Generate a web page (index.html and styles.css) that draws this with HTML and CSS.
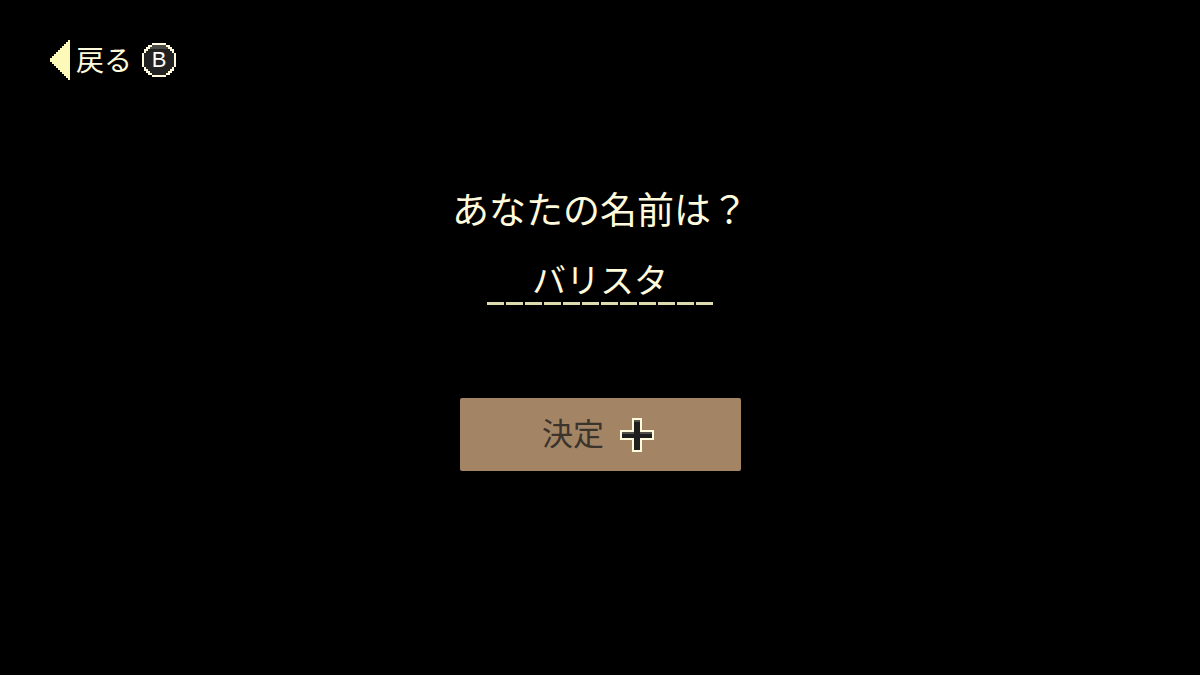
FILE: index.html
```html
<!DOCTYPE html>
<html lang="ja">
<head>
  <meta charset="UTF-8" />
  <meta name="viewport" content="width=device-width, initial-scale=1.0"/>
  <title>あなたの名前は?</title>
  <link rel="stylesheet" href="styles.css">
</head>
<body>
  <header class="top-bar">
    <button type="button" class="back-btn">
      <svg class="arrow" viewBox="0 0 10 20" shape-rendering="crispEdges" aria-hidden="true">
        <path d="M10 0V20H9V19H8V18H7V17H6V16H5V15H4V14H3V13H2V12H1V11H0V9H1V8H2V7H3V6H4V5H5V4H6V3H7V2H8V1H9V0Z" fill="#fdf9b8"/>
      </svg>
      <span class="back-label">戻る</span>
      <span class="pad-key">
        <svg viewBox="0 0 17 17" shape-rendering="crispEdges" aria-hidden="true">
          <path d="M5 0H12V1H14V2H15V3H16V5H17V12H16V14H15V15H14V16H12V17H5V16H3V15H2V14H1V12H0V5H1V3H2V2H3V1H5Z" fill="#fffbdc"/>
          <path d="M5 1H12V2H13V3H14V4H15V5H16V12H15V13H14V14H13V15H12V16H5V15H4V14H3V13H2V12H1V5H2V4H3V3H4V2H5Z" fill="#222"/>
          <path d="M5 1H12V2H13V3H4V2H5Z" fill="#4a4a44"/>
        </svg>
        <span class="pad-letter">B</span>
      </span>
    </button>
  </header>

  <main class="name-form">
    <label class="question" for="playerName">あなたの名前は？</label>
    <input type="text" id="playerName" class="name-input" value="バリスタ" maxlength="12" autocomplete="off" spellcheck="false">
    <button type="button" class="confirm-btn">
      <span class="confirm-label">決定</span>
      <svg class="plus" viewBox="0 0 17 17" shape-rendering="crispEdges" aria-hidden="true">
        <path d="M6 0H11V6H17V11H11V17H6V11H0V6H6Z" fill="#fffbdc"/>
        <path d="M7 1H10V7H16V10H10V16H7V10H1V7H7Z" fill="#1e1e1e"/>
        <path d="M7 1H10V2H7ZM1 7H7V8H1ZM10 7H16V8H10Z" fill="#505048"/>
      </svg>
    </button>
  </main>
</body>
</html>
```
FILE: styles.css
```css
* {
  box-sizing: border-box;
}

body {
  margin: 0;
  background: #000;
  color: #fffbdc;
  font-family: "Noto Sans CJK JP", sans-serif;
}

button, input {
  padding: 0;
  border: none;
  background: none;
  color: inherit;
  font-family: inherit;
}

button {
  cursor: pointer;
}

.top-bar {
  padding: 40px 48px 0;
}

.back-btn {
  display: flex;
  align-items: center;
  height: 40px;
}

.arrow {
  width: 20px;
  height: 40px;
  margin: 0 6px 0 2px;
}

.back-label {
  padding-bottom: 2px;
  font-size: 28px;
  line-height: 38px;
}

.pad-key {
  display: grid;
  place-items: center;
  width: 34px;
  height: 34px;
  margin-left: 10px;
}

.pad-key > * {
  grid-area: 1 / 1;
}

.pad-letter {
  color: #fff;
  font-family: "Liberation Sans", sans-serif;
  font-size: 22px;
  line-height: 22px;
}

.name-form {
  display: flex;
  flex-direction: column;
  align-items: center;
  padding-top: 100px;
}

.question {
  font-size: 37px;
  line-height: 56px;
}

/* twelve dashes, one for each character slot */
.name-input {
  width: 226px;
  height: 52px;
  margin-top: 17px;
  padding-bottom: 2px;
  background: repeating-linear-gradient(to right, #dedbae 0 17px, transparent 17px 19px) left bottom / 100% 3px no-repeat;
  font-size: 34px;
  line-height: 48px;
  text-align: center;
  outline: none;
}

.confirm-btn {
  display: flex;
  align-items: center;
  justify-content: center;
  gap: 16px;
  width: 281px;
  height: 73px;
  margin-top: 93px;
  padding-right: 4px;
  border-radius: 2px;
  background: #a38565;
  color: #3b342c;
  font-size: 31px;
  line-height: 40px;
}

.confirm-label {
  padding-bottom: 6px;
}

.plus {
  width: 34px;
  height: 34px;
}
```
